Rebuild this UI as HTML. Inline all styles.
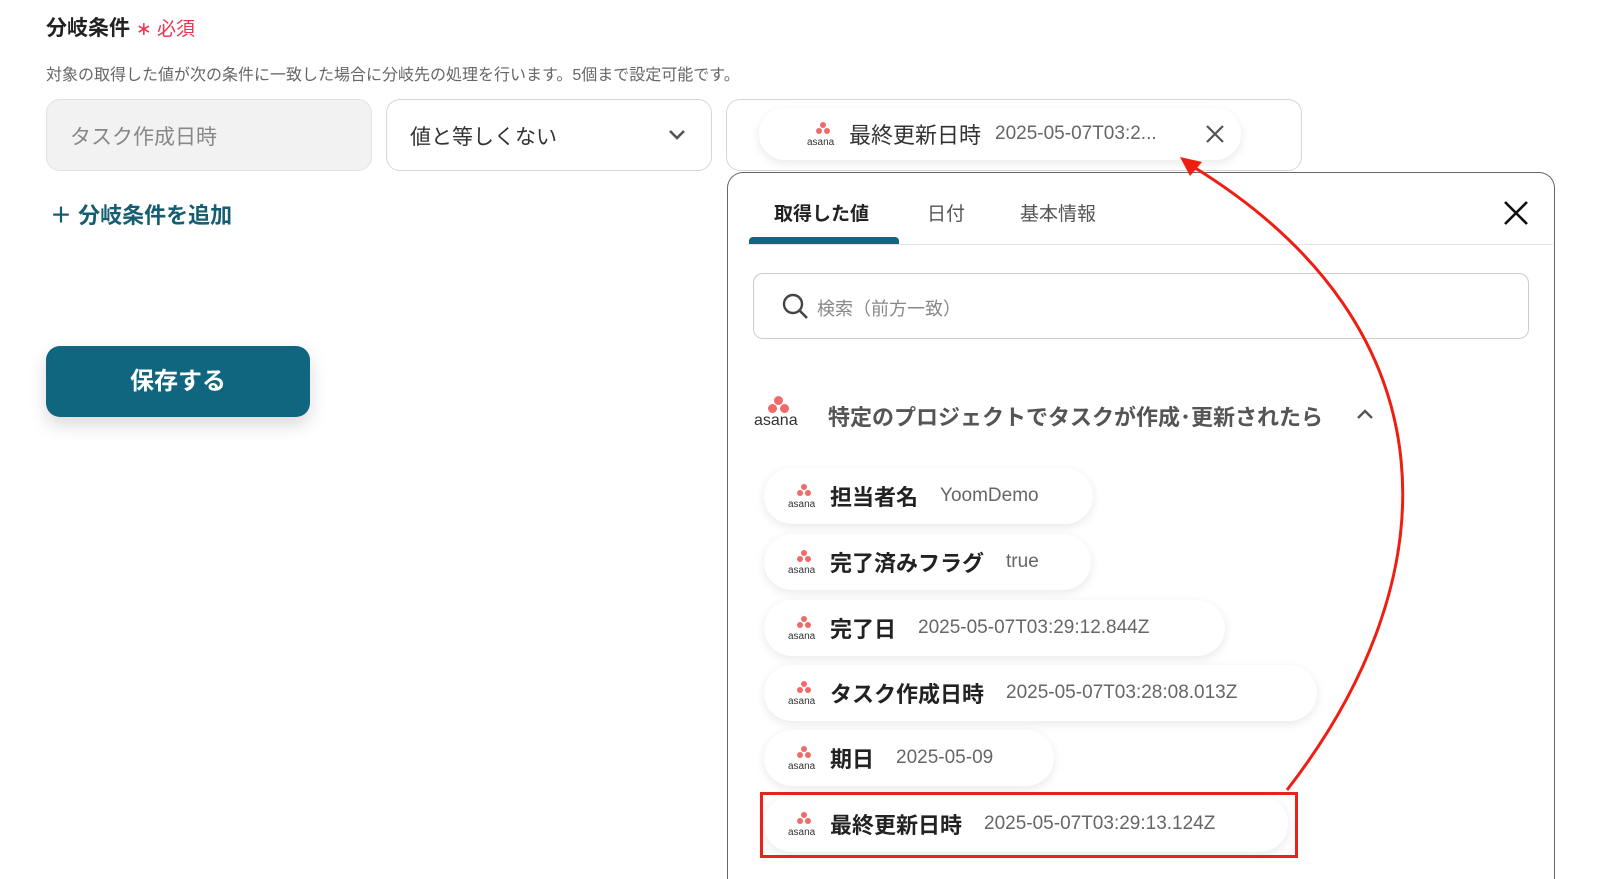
<!DOCTYPE html>
<html><head><meta charset="utf-8"><style>
*{box-sizing:border-box;margin:0;padding:0}
html,body{width:1600px;height:879px;overflow:hidden}
body{background:#fff;font-family:"Liberation Sans","Noto Sans CJK JP",sans-serif;position:relative;color:#222}
.a{position:absolute}
.box{position:absolute;border:1.5px solid #d3d7dc;border-radius:14px;height:72px;top:99px}
.pill{position:absolute;left:764px;height:56px;border-radius:28px;background:#fff;box-shadow:0 3px 10px rgba(0,0,0,.09);display:flex;align-items:center;padding-left:24px;white-space:nowrap}
.pill b{font-size:22px;color:#222;font-weight:bold;margin-left:10px}
.pill span{font-size:19px;color:#666;margin-left:22px}
.logo{display:inline-block;width:32px;height:24px;position:relative}
.logo i{position:absolute;width:6px;height:6px;border-radius:50%;background:#f06a6a}
.logo em{position:absolute;left:0;bottom:-2px;font-style:normal;font-size:10px;color:#333;letter-spacing:0}
</style></head><body>
<div class="a" style="left:46px;top:12px;font-size:21px;font-weight:bold;color:#222">分岐条件 <span style="color:#f0334f;font-weight:normal;font-size:19px">∗ 必須</span></div>
<div class="a" style="left:46px;top:61px;font-size:16px;color:#666">対象の取得した値が次の条件に一致した場合に分岐先の処理を行います。5個まで設定可能です。</div>
<div class="box" style="left:46px;width:326px;background:#f2f2f2;border-color:#e2e2e2"><div class="a" style="left:23px;top:21px;font-size:21px;color:#888">タスク作成日時</div></div>
<div class="box" style="left:386px;width:326px"><div class="a" style="left:23px;top:21px;font-size:21px;color:#333">値と等しくない</div>
<svg class="a" style="left:280px;top:28px" width="20" height="14"><path d="M3 3 L10 10 L17 3" stroke="#555" stroke-width="2.6" fill="none"/></svg></div>
<div class="box" style="left:726px;width:576px"></div>
<div class="pill" style="top:108px;left:759px;width:482px;height:52px;padding-left:26px">
<span class="logo"><i style="left:13px;top:0"></i><i style="left:9px;top:6px"></i><i style="left:17px;top:6px"></i><em>asana</em></span>
<b style="font-weight:normal;font-size:22px;color:#333">最終更新日時</b><span style="margin-left:14px;color:#666">2025-05-07T03:2...</span>
<svg class="a" style="left:446px;top:16px" width="20" height="20"><path d="M2 2L18 18M18 2L2 18" stroke="#555" stroke-width="2.2"/></svg></div>
<div class="a" style="left:50px;top:198px;font-size:22px;font-weight:bold;color:#155e72">＋ 分岐条件を追加</div>
<div class="a" style="left:46px;top:346px;width:264px;height:71px;background:#11667f;border-radius:14px;box-shadow:0 8px 18px rgba(0,0,0,.15);color:#fff;font-size:24px;font-weight:bold;text-align:center;line-height:71px">保存する</div>

<div class="a" style="left:727px;top:172px;width:828px;height:707px;border:1.5px solid #666;border-bottom:none;border-radius:16px 16px 0 0;background:#fff"></div>
<div class="a" style="left:774px;top:199px;font-size:19px;font-weight:bold;color:#222">取得した値</div>
<div class="a" style="left:927px;top:199px;font-size:19px;color:#555">日付</div>
<div class="a" style="left:1020px;top:199px;font-size:19px;color:#555">基本情報</div>
<div class="a" style="left:747px;top:244px;width:806px;height:1px;background:#e3e3e3"></div>
<div class="a" style="left:749px;top:237px;width:150px;height:7px;background:#11667f;border-radius:4px 4px 0 0"></div>
<svg class="a" style="left:1502px;top:199px" width="28" height="28"><path d="M3 3L25 25M25 3L3 25" stroke="#111" stroke-width="2.6"/></svg>
<div class="a" style="left:753px;top:273px;width:776px;height:66px;border:1.5px solid #ccc;border-radius:10px"></div>
<svg class="a" style="left:781px;top:292px" width="30" height="30"><circle cx="12" cy="12" r="9" stroke="#444" stroke-width="2.4" fill="none"/><path d="M19 19L26 26" stroke="#444" stroke-width="2.6"/></svg>
<div class="a" style="left:817px;top:295px;font-size:18px;color:#888">検索（前方一致）</div>
<div class="a" style="left:754px;top:396px;width:50px;height:36px">
<i class="a" style="left:20px;top:0;width:9px;height:9px;border-radius:50%;background:#f06a6a"></i>
<i class="a" style="left:14px;top:8px;width:9px;height:9px;border-radius:50%;background:#f06a6a"></i>
<i class="a" style="left:26px;top:8px;width:9px;height:9px;border-radius:50%;background:#f06a6a"></i>
<span class="a" style="left:0;top:16px;font-size:16px;color:#333">asana</span></div>
<div class="a" style="left:828px;top:400px;font-size:22px;color:#555;font-weight:bold">特定のプロジェクトでタスクが作成･更新されたら</div>
<svg class="a" style="left:1355px;top:407px" width="20" height="14"><path d="M3 11L10 4L17 11" stroke="#555" stroke-width="2.4" fill="none"/></svg>

<div class="pill" style="top:468px;width:329px"><span class="logo" style="margin:0"><i style="left:13px;top:0"></i><i style="left:9px;top:6px"></i><i style="left:17px;top:6px"></i><em>asana</em></span><b>担当者名</b><span>YoomDemo</span></div>
<div class="pill" style="top:534px;width:327px"><span class="logo" style="margin:0"><i style="left:13px;top:0"></i><i style="left:9px;top:6px"></i><i style="left:17px;top:6px"></i><em>asana</em></span><b>完了済みフラグ</b><span>true</span></div>
<div class="pill" style="top:600px;width:461px"><span class="logo" style="margin:0"><i style="left:13px;top:0"></i><i style="left:9px;top:6px"></i><i style="left:17px;top:6px"></i><em>asana</em></span><b>完了日</b><span>2025-05-07T03:29:12.844Z</span></div>
<div class="pill" style="top:665px;width:553px"><span class="logo" style="margin:0"><i style="left:13px;top:0"></i><i style="left:9px;top:6px"></i><i style="left:17px;top:6px"></i><em>asana</em></span><b>タスク作成日時</b><span>2025-05-07T03:28:08.013Z</span></div>
<div class="pill" style="top:730px;width:290px"><span class="logo" style="margin:0"><i style="left:13px;top:0"></i><i style="left:9px;top:6px"></i><i style="left:17px;top:6px"></i><em>asana</em></span><b>期日</b><span>2025-05-09</span></div>
<div class="pill" style="top:796px;width:524px"><span class="logo" style="margin:0"><i style="left:13px;top:0"></i><i style="left:9px;top:6px"></i><i style="left:17px;top:6px"></i><em>asana</em></span><b>最終更新日時</b><span>2025-05-07T03:29:13.124Z</span></div>
<div class="a" style="left:760px;top:792px;width:538px;height:66px;border:3px solid #e8231a"></div>
<svg class="a" style="left:0;top:0" width="1600" height="879"><path d="M1287 790 C1450 580 1460 330 1192 166" stroke="#f01e12" stroke-width="3" fill="none"/><path d="M1180 157 L1202 162 L1190 176 Z" fill="#f01e12"/></svg>
</body></html>
